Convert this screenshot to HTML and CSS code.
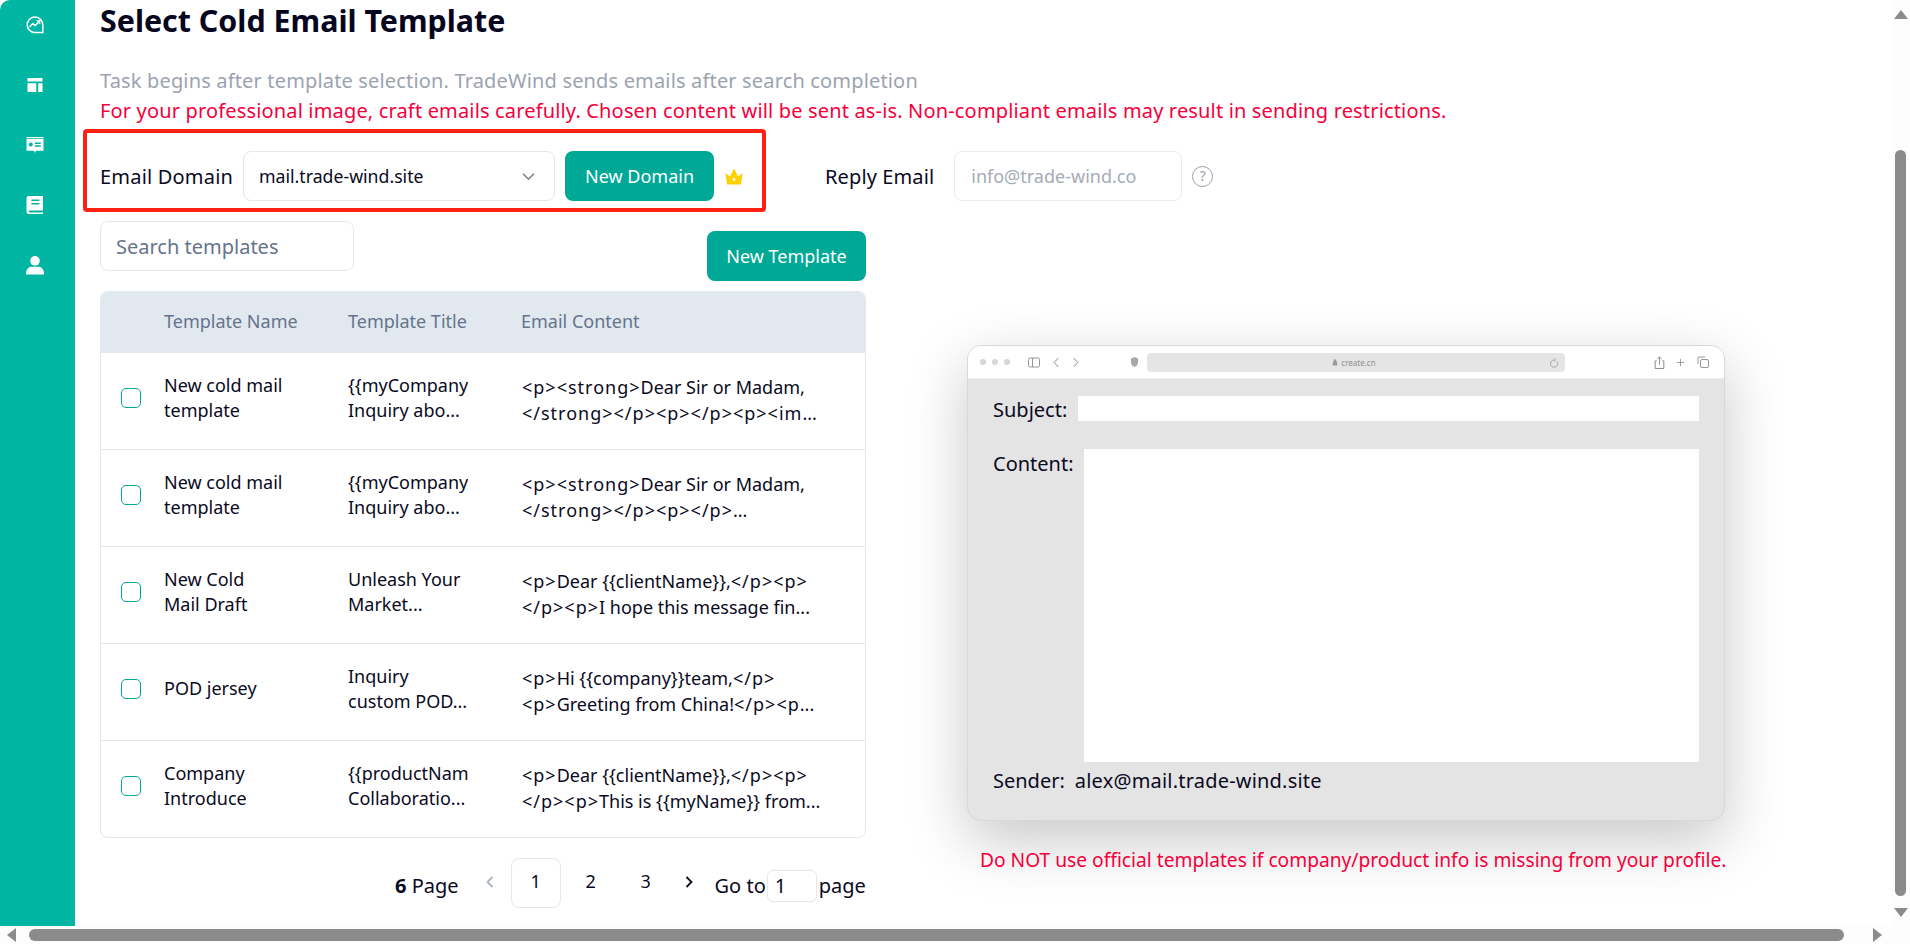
FILE: index.html
```html
<!DOCTYPE html>
<html lang="en">
<head>
<meta charset="utf-8">
<title>Select Cold Email Template</title>
<link rel="stylesheet" href="styles.css">
</head>
<body>
<div class="app">
  <nav class="sidebar">
    <svg class="nav-icon" viewBox="0 0 20 20"><path class="ol" d="M17.600 17.600H10A7.800 7.800 0 1 1 17.800 10v7.600z"/><path class="ol" d="M4.600 12l3.200-3.400 2.600 2 4-4.400M11.800 6h2.800v2.800"/></svg>
    <svg class="nav-icon" viewBox="0 0 20 20"><path d="M2.500 3h15v3.400h-15zM2.500 8.200h8.800v8.800H2.500zM13.200 8.200h4.300v8.800h-4.300z"/></svg>
    <svg class="nav-icon" viewBox="0 0 20 20"><path d="M1.500 2h17v.9h-17zM1.500 3.800h17v12h-7.600l-.9 2.200-.9-2.200H1.500z"/><circle class="cut" cx="5.800" cy="9.600" r="2"/><path class="cut" d="M9.800 7.400h6v1.500h-6zM9.800 10.200h6v1.500h-6z"/></svg>
    <svg class="nav-icon" viewBox="0 0 20 20"><path d="M4 1h14v14.400H4.400a1.300 1.300 0 0 0 0 2.100H18V19H4a2.500 2.500 0 0 1-2.500-2.500V3.500A2.500 2.500 0 0 1 4 1z"/><path class="cut" d="M6.400 4.500h8v1.500h-8zM6.400 8h8v1.500h-8z"/></svg>
    <svg class="nav-icon" viewBox="0 0 20 20"><circle cx="10" cy="5.800" r="4.800"/><path d="M1 18.500c0-5 3.500-6.800 5.800-6.800h6.400c2.300 0 5.800 1.800 5.800 6.800 0 .8-.4 1-1 1H2c-.6 0-1-.2-1-1z"/></svg>
  </nav>

  <main class="main">
    <h1 class="title">Select Cold Email Template</h1>
    <p class="hint">Task begins after template selection. TradeWind sends emails after search completion</p>
    <p class="warning">For your professional image, craft emails carefully. Chosen content will be sent as-is. Non-compliant emails may result in sending restrictions.</p>

    <section class="domain-row">
      <div class="domain-box">
        <span class="field-label domain-label">Email Domain</span>
        <div class="select">
          <span>mail.trade-wind.site</span>
          <svg class="chev" viewBox="0 0 12 8"><path d="M1 1.500l5 5 5-5"/></svg>
        </div>
        <button class="btn btn-domain">New Domain</button>
        <svg class="crown" viewBox="0 0 18 17"><path d="M.5 5L5 8.500 9 .5l4 8L17.500 5 16 16.500H2z"/><circle cx="9" cy="11.500" r="1.400"/></svg>
      </div>
      <div class="reply">
        <span class="field-label">Reply Email</span>
        <div class="reply-input">info@trade-wind.co</div>
        <span class="help">?</span>
      </div>
    </section>

    <div class="columns">
      <section class="left">
        <div class="tools">
          <div class="search">Search templates</div>
          <button class="btn btn-template">New Template</button>
        </div>
        <div class="table">
          <div class="row head">
            <span></span><span>Template Name</span><span>Template Title</span><span class="head-content">Email Content</span>
          </div>
          <div class="row">
            <i class="check"></i>
            <div class="cell">New cold mail<br>template</div>
            <div class="cell"><span class="clip">{{myCompany}}</span><span class="clip">Inquiry abo...</span></div>
            <div class="cell content"><span class="tag">&lt;p&gt;&lt;strong&gt;</span>Dear Sir or Madam,<br><span class="tag">&lt;/strong&gt;&lt;/p&gt;&lt;p&gt;&lt;/p&gt;&lt;p&gt;&lt;im</span>...</div>
          </div>
          <div class="row">
            <i class="check"></i>
            <div class="cell">New cold mail<br>template</div>
            <div class="cell"><span class="clip">{{myCompany}}</span><span class="clip">Inquiry abo...</span></div>
            <div class="cell content"><span class="tag">&lt;p&gt;&lt;strong&gt;</span>Dear Sir or Madam,<br><span class="tag">&lt;/strong&gt;&lt;/p&gt;&lt;p&gt;&lt;/p&gt;</span>...</div>
          </div>
          <div class="row">
            <i class="check"></i>
            <div class="cell">New Cold<br>Mail Draft</div>
            <div class="cell"><span class="clip">Unleash Your</span><span class="clip">Market...</span></div>
            <div class="cell content"><span class="tag">&lt;p&gt;</span>Dear {{clientName}},<span class="tag">&lt;/p&gt;&lt;p&gt;</span><br><span class="tag">&lt;/p&gt;&lt;p&gt;</span>I hope this message fin...</div>
          </div>
          <div class="row">
            <i class="check"></i>
            <div class="cell">POD jersey</div>
            <div class="cell"><span class="clip">Inquiry</span><span class="clip">custom POD...</span></div>
            <div class="cell content"><span class="tag">&lt;p&gt;</span>Hi {{company}}team,<span class="tag">&lt;/p&gt;</span><br><span class="tag">&lt;p&gt;</span>Greeting from China!<span class="tag">&lt;/p&gt;&lt;p</span>...</div>
          </div>
          <div class="row">
            <i class="check"></i>
            <div class="cell">Company<br>Introduce</div>
            <div class="cell"><span class="clip">{{productName}}</span><span class="clip">Collaboratio...</span></div>
            <div class="cell content"><span class="tag">&lt;p&gt;</span>Dear {{clientName}},<span class="tag">&lt;/p&gt;&lt;p&gt;</span><br><span class="tag">&lt;/p&gt;&lt;p&gt;</span>This is {{myName}} from...</div>
          </div>
        </div>
        <div class="pager">
          <span class="total"><b>6</b> Page</span>
          <svg class="pg-arrow prev" viewBox="0 0 10 14"><path d="M7.500 2L2.500 7l5 5"/></svg>
          <span class="pg current">1</span>
          <span class="pg">2</span>
          <span class="pg">3</span>
          <svg class="pg-arrow next" viewBox="0 0 10 14"><path d="M2.500 2l5 5-5 5"/></svg>
          <span class="goto">Go to</span>
          <span class="goto-input">1</span>
          <span class="goto">page</span>
        </div>
      </section>

      <section class="right">
        <div class="browser">
          <div class="chrome">
            <span class="dots"><i></i><i></i><i></i></span>
            <svg class="tb sidebar-ic" viewBox="0 0 12 10"><rect x=".5" y=".5" width="11" height="9" rx="1.500"/><path d="M4.500.5v9"/></svg>
            <svg class="tb" viewBox="0 0 8 10"><path d="M5.500 1L2 5l3.500 4"/></svg>
            <svg class="tb fwd" viewBox="0 0 8 10"><path d="M2.500 1L6 5 2.500 9"/></svg>
            <svg class="shield" viewBox="0 0 10 12"><path d="M5 .5l4 1.500v4c0 3-2 4.500-4 5.500-2-1-4-2.500-4-5.500V2z"/></svg>
            <div class="url">
              <svg class="lock" viewBox="0 0 8 10"><path d="M1 4.500h6V9.500H1zM2.200 4.500V3a1.800 1.800 0 0 1 3.600 0v1.500"/></svg>
              <span>create.cn</span>
              <svg class="reload" viewBox="0 0 10 12"><path d="M8 4.500a3.600 3.600 0 1 1-3-1.500M5 1l1.500 2L5 4.500"/></svg>
            </div>
            <svg class="tb share" viewBox="0 0 10 12"><path d="M2.500 4.500H1v7h8v-7H7.500M5 8V1M3 2.800L5 1l2 1.800"/></svg>
            <svg class="tb plus" viewBox="0 0 10 10"><path d="M5 1v8M1 5h8"/></svg>
            <svg class="tb tabs" viewBox="0 0 12 12"><rect x="3.500" y="3.500" width="8" height="8" rx="1.500"/><path d="M1 8V2a1 1 0 0 1 1-1h6"/></svg>
          </div>
          <div class="mail">
            <div class="mail-row subject">
              <span>Subject:</span><div class="blank"></div>
            </div>
            <div class="mail-row body">
              <span>Content:</span><div class="blank"></div>
            </div>
            <div class="sender"><span>Sender:</span><span class="sender-addr">alex@mail.trade-wind.site</span></div>
          </div>
        </div>
        <p class="note">Do NOT use official templates if company/product info is missing from your profile.</p>
      </section>
    </div>
  </main>
</div>

<div class="scroll-v"><svg class="arrow up" viewBox="0 0 14 10"><path d="M7 0l7 9H0z"/></svg><i class="thumb-v"></i><svg class="arrow down" viewBox="0 0 14 10"><path d="M7 10L0 1h14z"/></svg></div>
<div class="scroll-h"><svg class="arrow to-left" viewBox="0 0 10 14"><path d="M0 7l9-7v14z"/></svg><i class="thumb-h"></i><svg class="arrow to-right" viewBox="0 0 10 14"><path d="M10 7L1 0v14z"/></svg></div>
</body>
</html>
```
FILE: styles.css
```css
* { box-sizing: border-box; }
html, body { margin: 0; height: 100%; overflow: hidden; background: #fff; }
body { font-family: "Noto Sans", "Open Sans", "Liberation Sans", sans-serif; color: #0a0a1e; font-size: 18px; }
p, h1 { margin: 0; }
.app { display: flex; height: 944px; width: 1910px; }

.sidebar { width: 75px; flex: none; background: #00b5a1; border-top-left-radius: 10px; display: flex; flex-direction: column; align-items: center; padding: 15px 5px 0 0; gap: 40px; }
.nav-icon { width: 20px; height: 20px; fill: #fff; display: block; }
.nav-icon .ol { fill: none; stroke: #fff; stroke-width: 1.500; }
.nav-icon .cut { fill: #00b5a1; }

.main { flex: 1; padding: 0 0 0 25px; min-width: 0; }
.title { font-size: 30.400px; font-weight: 700; line-height: 41px; height: 42px; color: #05051e; }
.hint { color: #9ca3af; font-size: 20px; line-height: 30px; margin-top: 24px; letter-spacing: .16px; }
.warning { color: #f5003c; font-size: 20px; line-height: 29px; letter-spacing: .16px; }

.domain-row { display: flex; align-items: center; margin-top: 4px; height: 83px; }
.domain-box { display: flex; align-items: center; width: 683px; height: 83px; margin: 0 59px 0 -17px; padding: 11px 0 0 13px; border: 4px solid #ff2014; border-radius: 4px; flex: none; }
.field-label { font-size: 20px; white-space: nowrap; letter-spacing: .12px; }
.domain-label { width: 132px; flex: none; letter-spacing: .2px; }
.select { width: 312px; height: 50px; margin-left: 11px; border: 1px solid #e2e8f0; border-radius: 8px; padding: 0 19px 0 15px; display: flex; align-items: center; justify-content: space-between; font-size: 17.700px; flex: none; }
.chev { width: 13px; height: 9px; fill: none; stroke: #7b7f86; stroke-width: 1.400; }
.btn { background: #00a896; color: #fff; border: 0; border-radius: 8px; height: 50px; font: inherit; font-size: 18px; padding: 0; white-space: nowrap; flex: none; }
.btn-domain { width: 149px; margin-left: 10px; }
.crown { width: 18px; height: 17px; margin-left: 11px; fill: #ffd000; flex: none; }
.crown circle { fill: #fff; }
.reply { display: flex; align-items: center; margin-top: 11px; }
.reply-input { width: 228px; height: 50px; margin-left: 20px; border: 1px solid #e8ecf2; border-radius: 8px; color: #a5abb5; display: flex; align-items: center; padding-left: 16px; font-size: 18px; }
.help { width: 21px; height: 21px; margin-left: 10px; border: 1.500px solid #9aa0a8; border-radius: 50%; color: #9aa0a8; display: flex; align-items: center; justify-content: center; font-size: 14px; line-height: 1; }

.columns { display: flex; margin-top: 9px; }
.left { width: 766px; flex: none; }
.tools { display: flex; justify-content: space-between; height: 70px; }
.search { width: 254px; height: 50px; border: 1px solid #e2e8f0; border-radius: 8px; display: flex; align-items: center; padding-left: 15px; color: #64748b; font-size: 20px; }
.btn-template { width: 159px; margin-top: 10px; }

.table { border: 1px solid #e2e8f0; border-radius: 8px; overflow: hidden; height: 547px; }
.row { display: grid; grid-template-columns: 63px 184px 174px 1fr; align-items: center; height: 97px; border-top: 1px solid #e2e8f0; font-size: 18px; line-height: 25.500px; padding-bottom: 6px; }
.row.head { height: 60px; border-top: 0; background: #e2e8f0; color: #64748b; padding-bottom: 0; }
.head-content { margin-left: -1px; }
.check { width: 20px; height: 20px; margin-left: 20px; border: 1.500px solid #00a896; border-radius: 5px; display: block; }
.clip { display: block; width: 120px; overflow: hidden; white-space: nowrap; }
.content { padding-top: 5px; white-space: nowrap; }
.tag { letter-spacing: 1px; }

.pager { display: flex; align-items: center; height: 50px; margin-top: 20px; padding-left: 295px; font-size: 20px; }
.total { white-space: nowrap; padding-top: 5px; }
.pg { width: 50px; height: 50px; display: flex; align-items: center; justify-content: center; font-size: 18px; margin-right: 5px; padding-bottom: 4px; flex: none; }
.pg.current { border: 1px solid #e2e8f0; border-radius: 8px; }
.pg-arrow { width: 10px; height: 14px; fill: none; stroke-width: 1.800; flex: none; margin-bottom: 2px; }
.prev { stroke: #a8b3c2; margin-left: 26px; margin-right: 16px; }
.next { stroke: #0a0a1e; margin-left: 8px; margin-right: 21px; }
.goto { padding-top: 5px; white-space: nowrap; }
.goto-input { width: 50px; height: 32px; margin: 6px 2px 0 1px; border: 1px solid #e2e8f0; border-radius: 6px; padding-left: 7px; line-height: 30px; flex: none; }

.right { flex: 1; padding: 124px 0 0 101px; min-width: 0; }
.browser { width: 758px; height: 476px; border: 1px solid #d8d8d8; border-radius: 14px; overflow: hidden; background: #e4e4e4; box-shadow: 0 20px 60px rgba(0, 0, 0, .22); }
.chrome { height: 33px; background: #fff; border-bottom: 1px solid #ececec; display: flex; align-items: center; padding-left: 12px; }
.dots { display: flex; gap: 6px; }
.dots i { width: 6px; height: 6px; border-radius: 50%; background: #d6d6d6; }
.tb { width: 11px; height: 11px; fill: none; stroke: #8a8a8a; stroke-width: .9; flex: none; margin-left: 11px; }
.sidebar-ic { margin-left: 18px; width: 12px; }
.fwd { margin-left: 8px; }
.shield { width: 9px; height: 12px; margin-left: 49px; fill: #a8a8a8; flex: none; }
.url { width: 418px; height: 19px; margin-left: 8px; background: #e5e5e5; border-radius: 4px; position: relative; display: flex; align-items: center; justify-content: center; font-size: 8px; color: #8e8e8e; gap: 3px; padding-right: 4px; flex: none; }
.lock { width: 6px; height: 8px; fill: #9a9a9a; }
.reload { position: absolute; right: 6px; top: 4px; width: 10px; height: 12px; fill: none; stroke: #9a9a9a; stroke-width: .8; }
.share { margin-left: 89px; height: 13px; }
.plus { margin-left: 11px; width: 9px; }
.tabs { margin-left: 12px; width: 12px; height: 12px; }

.mail { height: 441px; padding: 17px 25px 0 25px; font-size: 20px; color: #0a0a1e; }
.mail-row { display: flex; }
.subject { height: 25px; align-items: center; gap: 11px; }
.subject span { padding-top: 2px; }
.subject .blank { width: 621px; height: 25px; background: #fff; }
.body { margin-top: 28px; height: 313px; gap: 10px; }
.body span { line-height: 30px; }
.body .blank { width: 615px; height: 313px; background: #fff; }
.sender { display: flex; gap: 10px; margin-top: 6px; line-height: 26px; }
.sender-addr { letter-spacing: .2px; }

.note { color: #f5003c; font-size: 19.200px; margin-top: 26px; margin-left: 13px; line-height: 26px; white-space: nowrap; }

.scroll-v { position: fixed; top: 0; right: 0; width: 18px; height: 925px; background: #fdfdfd; }
.thumb-v { position: absolute; left: 3px; top: 150px; width: 11px; height: 746px; background: #8b8b8b; border-radius: 6px; }
.scroll-h { position: fixed; left: 0; bottom: 0; width: 1910px; height: 18px; background: #fdfdfd; }
.thumb-h { position: absolute; left: 29px; top: 3px; width: 1815px; height: 12px; background: #8b8b8b; border-radius: 6px; }
.arrow { position: absolute; fill: #8b8b8b; }
.up { left: 2px; top: 10px; width: 14px; height: 10px; }
.down { left: 2px; top: 907px; width: 14px; height: 10px; }
.to-left { left: 7px; top: 2px; width: 10px; height: 14px; }
.to-right { left: 1872px; top: 2px; width: 10px; height: 14px; }
```
